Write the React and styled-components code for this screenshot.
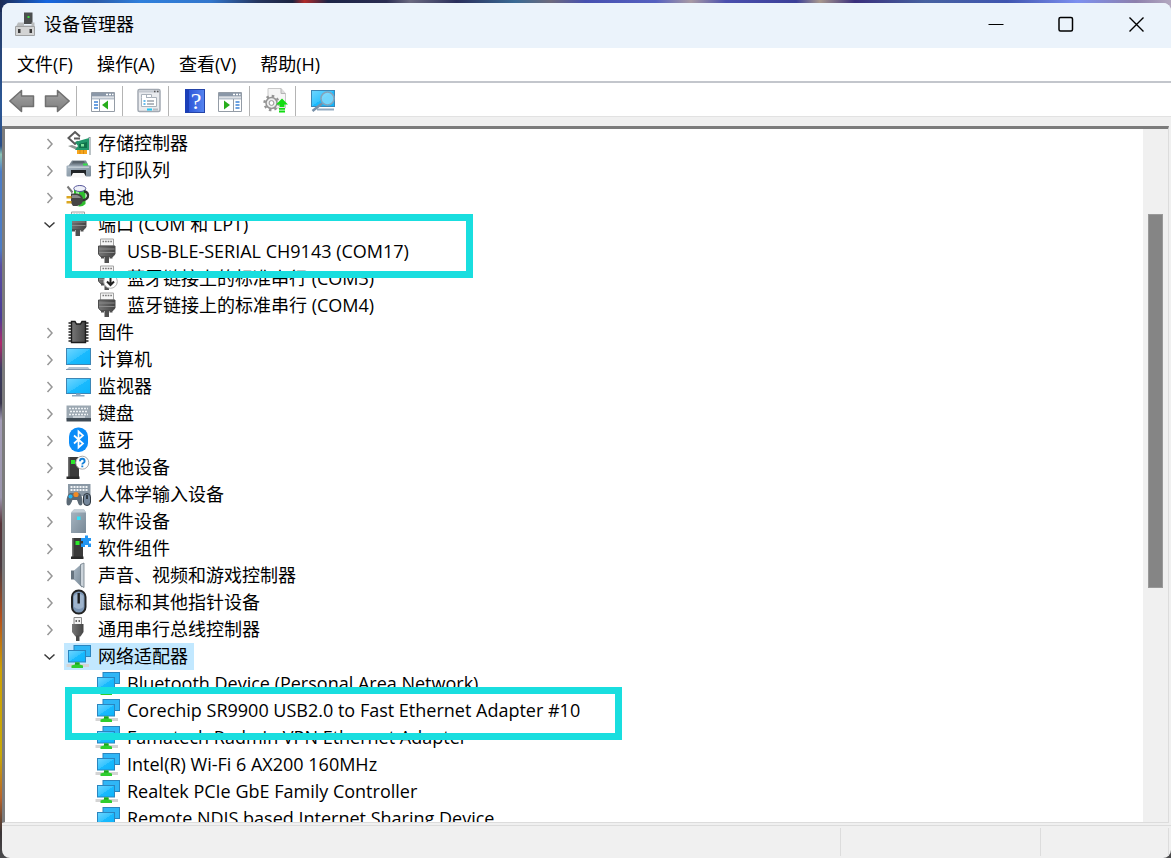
import React from "react"
import styled, { createGlobalStyle } from "styled-components"

const GlobalStyle = createGlobalStyle`
  * {
    box-sizing: border-box;
  }
  body {
    margin: 0;
    font-family: "Open Sans", "Noto Sans CJK SC", sans-serif;
    font-size: 18px;
    color: #000;
  }
  button {
    font: inherit;
    color: inherit;
    border: 0;
    padding: 0;
    background: none;
  }
  svg {
    display: block;
    flex: none;
  }
`

const Desktop = styled.div`
  height: 100vh;
  padding: 3px 0 0 2px;
  background:
    linear-gradient(
        90deg,
        #1b2b55 0,
        #1666e0 4%,
        #2a5aa8 8%,
        #2f7fdc 12%,
        #3276cc 18%,
        #25355f 22%,
        #1c2340 25%,
        #b02a2a 26%,
        #1d2547 28%,
        #2a2d52 33%,
        #6b6a80 35%,
        #2a2f5c 39%,
        #3a6a94 44%,
        #6d6a7c 47%,
        #4650b0 50%,
        #5560c0 56%,
        #a89aa4 59%,
        #4a4fae 62%,
        #3b3f98 68%,
        #a8988e 70%,
        #3a2f7c 73%,
        #4661a0 79%,
        #3f55b0 86%,
        #7d90f0 92%,
        #8d80ac 97%,
        #b3a8c0 100%
      )
      top / 100% 12px no-repeat,
    linear-gradient(
      180deg,
      #22335c 0,
      #2c5896 12%,
      #2a4d86 17%,
      #8cc4b4 18%,
      #4d7cc4 20%,
      #4d7cc4 29%,
      #5a4fa0 31%,
      #4a3c94 37%,
      #b02a6c 40%,
      #3c3c60 43%,
      #39364c 47%,
      #a39cb6 49%,
      #9a94ac 58%,
      #58343a 61%,
      #4a3c42 66%,
      #b4501c 72%,
      #cda006 78%,
      #c8a808 88%,
      #b8642c 93%,
      #3a3436 97%,
      #4a4a4c 100%
    );
`

const Window = styled.div`
  height: 100%;
  display: flex;
  flex-direction: column;
  border-radius: 8px;
  overflow: hidden;
  background: #f0f0f0;
`

const TitleBar = styled.header`
  display: flex;
  align-items: center;
  height: 45px;
  flex: none;
  padding: 0 0 3px 12px;
  background: #ebf3fb;
`

const Title = styled.h1`
  flex: 1;
  margin: 0 0 0 4px;
  font-size: 18px;
  font-weight: 400;
  line-height: 26px;
`

const CaptionButton = styled.button`
  display: flex;
  align-items: center;
  justify-content: center;
  width: 70px;
  height: 42px;
`

const MenuBar = styled.nav`
  display: flex;
  align-items: center;
  height: 35px;
  flex: none;
  padding-left: 3px;
  background: #fff;
  border-bottom: 2px solid #c3c6cc;
`

const MenuButton = styled.button`
  padding: 0 12px;
  line-height: 27px;
`

const ToolBar = styled.div`
  display: flex;
  align-items: center;
  height: 34px;
  flex: none;
  padding: 2px 0 0 2px;
  background: #fff;
  border-bottom: 1px solid #e2e2e2;
`

const ToolButton = styled.button`
  display: flex;
  align-items: center;
  justify-content: center;
  width: 35px;
  height: 30px;
`

const Separator = styled.span`
  width: 2px;
  height: 30px;
  margin: 0 8px 0 1px;
  border-right: 1px solid #b4b4b4;
`

const Content = styled.main`
  display: flex;
  flex: 1;
  min-height: 0;
  margin: 9px 2px 0 0;
  border: solid;
  border-width: 3px 1px 1px 3px;
  border-color: #7c7c7c #dcdcdc #dcdcdc #7c7c7c;
  background: #fff;
`

const TreePane = styled.div`
  position: relative;
  flex: 1;
  min-width: 0;
  overflow: hidden;
  padding-top: 1px;
`

const TreeList = styled.ul`
  margin: 0;
  padding: 0;
  list-style: none;
`

const Row = styled.div`
  display: flex;
  align-items: center;
  height: 27px;
  padding-left: ${(p) => (p.$child ? 61 : 32)}px;
`

const Expander = styled.button`
  display: flex;
  align-items: center;
  justify-content: center;
  width: 24px;
  height: 27px;
`

const Spacer = styled.span`
  width: 24px;
`

const Label = styled.span`
  display: flex;
  align-items: center;
  height: 27px;
  margin-left: 3px;
  padding: 0 6px 0 2px;
  gap: 6px;
  line-height: 27px;
  white-space: nowrap;
  background: ${(p) => (p.$selected ? "#c2e8ff" : "transparent")};
`

const Highlight = styled.div`
  position: absolute;
  left: 60px;
  top: ${(p) => p.$top}px;
  width: ${(p) => p.$width}px;
  height: ${(p) => p.$height}px;
  border: 7px solid #19dedf;
  pointer-events: none;
`

const ScrollTrack = styled.div`
  width: 25px;
  padding: 0 5px;
  background: #f0f0f0;
`

const ScrollThumb = styled.div`
  position: relative;
  top: 12.3%;
  height: 54%;
  background: #858585;
  border: 1px solid #999;
`

const StatusBar = styled.footer`
  display: flex;
  height: 33px;
  flex: none;
  margin-top: 2px;
  padding: 2px 2px 2px 0;
  border-top: 1px solid #dcdcdc;
`

const StatusCell = styled.div`
  flex: ${(p) => (p.$width ? `0 0 ${p.$width}px` : 1)};
  border-right: 1px solid #dcdcdc;
`

/* ---- tree icons, drawn on a 26 x 27 grid ---- */

const Icon = ({ children }) => (
  <svg width="26" height="27" viewBox="0 0 26 27" aria-hidden="true">
    {children}
  </svg>
)

const HiddenSvg = styled.svg`
  position: absolute;
`

const Defs = () => (
  <HiddenSvg width="0" height="0" aria-hidden="true">
    <defs>
      <linearGradient id="screen" x1="0" y1="0" x2="1" y2="1">
        <stop offset="0" stopColor="#6fd6ff" />
        <stop offset="0.5" stopColor="#35c4ff" />
        <stop offset="0.5" stopColor="#1abafe" />
        <stop offset="1" stopColor="#0cb4fb" />
      </linearGradient>
      <linearGradient id="steel" x1="0" y1="0" x2="1" y2="1">
        <stop offset="0" stopColor="#a9b7c3" />
        <stop offset="1" stopColor="#778896" />
      </linearGradient>
      <linearGradient id="dark" x1="0" y1="0" x2="1" y2="0">
        <stop offset="0" stopColor="#777" />
        <stop offset="1" stopColor="#444" />
      </linearGradient>
      <linearGradient id="arrow" x1="0" y1="0" x2="0" y2="1">
        <stop offset="0" stopColor="#a6a6a6" />
        <stop offset="0.5" stopColor="#909090" />
        <stop offset="1" stopColor="#7e7e7e" />
      </linearGradient>
    </defs>
  </HiddenSvg>
)

const StorageIcon = () => (
  <Icon>
    <path d="M13.500 6 9 2 2.500 8 9 14l3-2.500M9 2l5 4.500M8 8.500h6" fill="none" stroke="#5a5a5a" strokeWidth="2" />
    <path d="M2 16l4-1 5 2v3z" fill="#8e9692" />
    <path d="M9 12l14-4v12H9l3-4z" fill="#22986a" />
    <path d="M13 14l8-2v6h-8z" fill="#12704a" />
    <path d="M15 14h3v2.500h-3z" fill="#7fe39c" />
    <path d="M11 20h10v4H11z" fill="#f7a51c" />
    <path d="M14 20v4M17.500 20v4" stroke="#d58a10" />
    <path d="M22.500 7.500h1.500V25" fill="none" stroke="#8e9aa0" strokeWidth="1.200" />
  </Icon>
)

const PrinterIcon = () => (
  <Icon>
    <path d="M6 3.500h14l3 6H2z" fill="#7c8994" />
    <path d="M7 4h11l1 2.500H6z" fill="#59646d" />
    <rect x="0.500" y="8.500" width="24.500" height="11" rx="1" fill="url(#steel)" />
    <path d="M2 9.500h21v1.500H2z" fill="#c0cbd3" />
    <path d="M17 6.500h4.500v2H17z" fill="#35e04c" />
    <path d="M5 13h15v6H5z" fill="#1f2326" />
    <path d="M7 16h11l2.500 4.500h-16z" fill="#f6f6f6" />
  </Icon>
)

const BatteryIcon = () => (
  <Icon>
    <path d="M1.500 2.500l5 6" stroke="#777" strokeWidth="2" />
    <path d="M8 5h11.500v15q-5.500 5-11.500 0z" fill="#2fbe2f" />
    <path d="M10 6h3v16h-3z" fill="#9af09a" />
    <ellipse cx="13.800" cy="4.500" rx="6" ry="3" fill="#eef0f8" stroke="#55559a" />
    <path d="M14 16.500q8.500 0 8-5.500-.5-3.500-4-3.500" fill="none" stroke="#333" strokeWidth="2.400" />
    <path d="M5 9.500h6q6 1 6 6t-6 6.500H7l-2-3z" fill="#454545" />
    <path d="M6 11h5q3 1 4 3H6z" fill="#8a8a8a" />
    <path d="M0.500 12h5v2.500h-5zM0.500 17h5v2.500h-5z" fill="#dba722" />
  </Icon>
)

const PlugShape = () => (
  <>
    <path d="M5.500 1h13v7h-13z" fill="#f6f6f6" stroke="#a2a2a2" />
    <path d="M7.500 3.500h9.500" stroke="#777" strokeWidth="1.600" strokeDasharray="1.600 1" />
    <path d="M3.500 8h16.500v8l-2 2.500H5.500l-2-2.500z" fill="url(#dark)" stroke="#4c4c4c" />
    <path d="M4 11h15.500M4 14.500h15.500" stroke="#8a8a8a" />
    <path d="M6 18h3v2.500H6zM14.500 18h3v2.500h-3zM9.500 18.500h4.500V25H9.500z" fill="#505050" />
  </>
)

const PortIcon = () => (
  <Icon>
    <PlugShape />
  </Icon>
)

const PortDisabledIcon = () => (
  <Icon>
    <PlugShape />
    <circle cx="15.500" cy="16.500" r="6.800" fill="#fff" stroke="#b0b0b0" />
    <path d="M15.500 12.500v7.500M12 16.500l3.500 3.500 3.500-3.500" fill="none" stroke="#222" strokeWidth="2" />
  </Icon>
)

const ChipIcon = () => (
  <Icon>
    <path d="M2.500 4h3M2.500 7h3M2.500 10h3M2.500 13h3M2.500 16h3M2.500 19h3M2.500 22h3M19.500 4h3M19.500 7h3M19.500 10h3M19.500 13h3M19.500 16h3M19.500 19h3M19.500 22h3" stroke="#222" strokeWidth="1.600" />
    <path d="M5.500 2.500H9l1.500 2.500h4L16 2.500h3.500v21h-14z" fill="url(#dark)" stroke="#1c1c1c" strokeWidth="1.400" />
  </Icon>
)

const ComputerIcon = () => (
  <Icon>
    <rect x="0.500" y="2.500" width="24" height="16" fill="url(#screen)" stroke="#3d86b5" />
    <path d="M3 21h19l2.500 3H0z" fill="#b4c4d4" />
    <path d="M0 23.500h25" stroke="#8197af" />
  </Icon>
)

const MonitorIcon = () => (
  <Icon>
    <rect x="0.500" y="5.500" width="24" height="15" fill="url(#screen)" stroke="#3d86b5" />
    <path d="M10 20.500h4.500V22h4v1.500H6V22h4z" fill="#8fa9c0" />
  </Icon>
)

const KeyboardIcon = () => (
  <Icon>
    <path d="M0.500 5.500h24.500v14H0.500z" fill="#9ca8b2" />
    <path d="M3 8.500h19M4 11.500h17M3 14.500h19" stroke="#eef2f5" strokeWidth="1.600" strokeDasharray="2 1" />
    <path d="M7 17h12" stroke="#eef2f5" />
    <path d="M0.500 18h24.500v3.500H0.500z" fill="#3f4b55" />
  </Icon>
)

const BluetoothIcon = () => (
  <Icon>
    <rect x="3" y="0.500" width="19" height="24.500" rx="9" fill="#0a8cf8" />
    <path d="M8 8.500l9 8-4.500 4V4.500l4.500 4-9 8" fill="none" stroke="#fff" strokeWidth="1.700" />
  </Icon>
)

const UnknownIcon = () => (
  <Icon>
    <path d="M2 3h11v20H2z" fill="#3a3a3a" />
    <path d="M2 3h1.500v20H2z" fill="#707070" />
    <path d="M0.500 22.500h13V25h-13z" fill="#2a2a2a" />
    <rect x="5" y="6" width="4" height="4" fill="#2be82b" />
    <circle cx="16.300" cy="8.700" r="6.500" fill="#fff" stroke="#a8a8a8" />
    <path d="M14 7.200q0-2.400 2.300-2.400t2.300 2.400q0 1-1.300 1.800-1 .6-1 1.500M16.300 11.500v1.700" fill="none" stroke="#1580d8" strokeWidth="1.900" />
  </Icon>
)

const HidIcon = () => (
  <Icon>
    <path d="M2 3h22.500v12H2z" fill="#8a98a5" />
    <path d="M4.500 6h18M4.500 9h18" stroke="#f0f3f5" strokeWidth="1.800" strokeDasharray="2 1" />
    <path d="M4 12h9q3.500 2 3.500 9 0 3.500-2 3.500t-3.500-5.500H6.500q-2 5.500-4 5.500T0.500 21Q0.500 14 4 12z" fill="#5b6975" />
    <path d="M6.500 19.500H11l1 4H5.500z" fill="#fff" />
    <circle cx="4.500" cy="15.500" r="2" fill="#20b5f5" />
    <circle cx="10" cy="13.500" r="2.600" fill="#f08a24" />
    <rect x="17.500" y="12.500" width="7" height="12" rx="3.500" fill="#74869a" stroke="#2e3740" />
    <path d="M21 14v4" stroke="#1d2329" strokeWidth="1.500" />
  </Icon>
)

const SoftDeviceIcon = () => (
  <Icon>
    <path d="M5 4.500l3-3h10l2 3v20.500H5z" fill="url(#steel)" />
    <path d="M5 4.500l3-3h10l2 3z" fill="#c4ced6" />
    <rect x="11" y="8.500" width="3.500" height="3.500" fill="#32e3fb" />
  </Icon>
)

const ComponentIcon = () => (
  <Icon>
    <path d="M6 3h11v19H6z" fill="#3a3a3a" />
    <path d="M6 3h1.500v19H6z" fill="#707070" />
    <path d="M5 21.500h12.500V24H5z" fill="#2a2a2a" />
    <rect x="9.500" y="6" width="4" height="4" fill="#2be82b" />
    <path d="M15 3h4V0.500h3V3h3v3h-2v2.500h2V12h-3v-2h-3v2h-4V8.500h2V6h-2z" fill="#2196f3" />
  </Icon>
)

const SpeakerIcon = () => (
  <Icon>
    <path d="M5 8.500h5v9H5z" fill="#66737e" />
    <path d="M8 8.500l8-7v24l-8-8z" fill="url(#steel)" />
    <path d="M14.500 2.500L18 1v24.500l-3.500-2z" fill="#ccd4db" stroke="#707c86" strokeWidth="0.800" />
  </Icon>
)

const MouseIcon = () => (
  <Icon>
    <rect x="6" y="1.500" width="13.500" height="23" rx="6.500" fill="#7b95b3" stroke="#222" strokeWidth="2" />
    <path d="M8 7q4.500-5 9.500 0v11q-4.500 4-9.500 0z" fill="#9fb4cc" />
    <path d="M12.700 4v10.500" stroke="#1d1d1d" strokeWidth="2.400" />
  </Icon>
)

const UsbIcon = () => (
  <Icon>
    <path d="M8 1.500h7.500V9H8z" fill="#f2f2f2" stroke="#8a8a8a" />
    <path d="M9.500 4h1.500v2H9.500zM12.500 4H14v2h-1.500z" fill="#666" />
    <path d="M6 8h11.500v8l-3 4.500H9.500L6 16z" fill="url(#dark)" />
    <path d="M10 19.500h3.500V25H10z" fill="#4a4a4a" />
  </Icon>
)

const NetworkIcon = () => (
  <Icon>
    <rect x="8" y="2.500" width="16.500" height="11" fill="#2fb6f6" stroke="#2a85bf" />
    <rect x="2.500" y="7.500" width="17" height="11.500" fill="url(#screen)" stroke="#2a85bf" />
    <path d="M0.500 21h22.500v3H0.500z" fill="#d4d4d4" />
    <path d="M9 19.500h4.500v2l3.500 1V25H5.500v-2.500l3.500-1z" fill="#2fce2f" />
    <path d="M9 19.500h4.500v2H9z" fill="#1fa51f" />
  </Icon>
)

/* ---- toolbar icons, drawn on a 26 x 26 grid ---- */

const ToolSvg = ({ children }) => (
  <svg width="26" height="26" viewBox="0 0 26 26" aria-hidden="true">
    {children}
  </svg>
)

const BackIcon = () => (
  <ToolSvg>
    <path d="M0.800 13 12.500 2.500V8h12v10.500h-12v5z" fill="url(#arrow)" stroke="#707070" strokeWidth="1.500" strokeLinejoin="round" />
  </ToolSvg>
)

const ForwardIcon = () => (
  <ToolSvg>
    <path d="M25.200 13 13.500 2.500V8h-12v10.500h12v5z" fill="url(#arrow)" stroke="#707070" strokeWidth="1.500" strokeLinejoin="round" />
  </ToolSvg>
)

const PanelFrame = ({ children }) => (
  <ToolSvg>
    <path d="M1.500 4.500h23v19h-23z" fill="#fff" stroke="#949ca6" />
    <path d="M2 5h22v3.500H2z" fill="#8b98a8" />
    <path d="M16 6.500h2M19 6.500h2M22 6.500h1.500" stroke="#fff" strokeWidth="1.500" />
    <path d="M2 10.500h22" stroke="#b9c2cc" strokeWidth="2" />
    {children}
  </ToolSvg>
)

const TreePanelIcon = () => (
  <PanelFrame>
    <path d="M9.500 11v12" stroke="#949ca6" />
    <path d="M4 14h4M4 17h4M4 20h4" stroke="#3c82d6" strokeWidth="1.500" />
    <path d="M18 12.500v9L12 17z" fill="#27ad1c" />
  </PanelFrame>
)

const ActionPanelIcon = () => (
  <PanelFrame>
    <path d="M16.500 11v12" stroke="#949ca6" />
    <path d="M18.500 14h4M18.500 17h4M18.500 20h4" stroke="#3c82d6" strokeWidth="1.500" />
    <path d="M7 12.500v9l6-4.500z" fill="#27ad1c" />
  </PanelFrame>
)

const PropertiesIcon = () => (
  <ToolSvg>
    <rect x="2" y="1.500" width="22" height="22" rx="1.500" fill="#e9ebee" stroke="#a2a9b2" strokeWidth="1.500" />
    <path d="M3 3.500h20" stroke="#c3c8cf" strokeWidth="2" />
    <path d="M18 3.500h1.500M21 3.500h1.500" stroke="#555" strokeWidth="1.500" />
    <path d="M5.500 9.500v-3h10v3h5v9h-15z" fill="#fff" stroke="#a9b1ba" />
    <path d="M10.500 7v3M15.500 9.500H10.500" stroke="#a9b1ba" />
    <path d="M7.500 13h2M7.500 16h2" stroke="#35a6e8" strokeWidth="1.500" />
    <path d="M11 13h7M11 16h7" stroke="#9aa2ac" strokeWidth="1.500" />
    <path d="M11 21.500h5" stroke="#20c6f2" strokeWidth="2" />
    <path d="M17 21.500h5" stroke="#b6bcc4" strokeWidth="2" />
  </ToolSvg>
)

const HelpBook = styled.span`
  width: 20px;
  height: 24px;
  border: 1px solid #2444a8;
  border-left: 4px solid #1b3fb8;
  background: linear-gradient(90deg, #2d57d8, #5584f0);
  color: #fff;
  font-family: "Liberation Serif", serif;
  font-size: 24px;
  line-height: 22px;
`

const ScanHardwareIcon = () => (
  <ToolSvg>
    <path d="M5 0.500h13l4.500 5V20H5z" fill="#f5f5f5" stroke="#c8c8c8" />
    <path d="M18 0.500v5h4.500" fill="#ddd" stroke="#b4b4b4" />
    <circle cx="8.500" cy="15" r="5.500" fill="#ededed" stroke="#949494" strokeWidth="1.500" />
    <circle cx="8.500" cy="15" r="7" fill="none" stroke="#949494" strokeWidth="2.400" strokeDasharray="2.500 3" />
    <circle cx="8.500" cy="15" r="2.400" fill="#fff" stroke="#949494" />
    <path d="M19 10.500l6 6h-3.500V19h-5v-2.500H13z" fill="#12dc12" />
    <path d="M16 20.800h6M16 23.500h6" stroke="#12dc12" strokeWidth="1.800" />
  </ToolSvg>
)

const ScanIcon = () => (
  <ToolSvg>
    <rect x="2.500" y="2.500" width="23" height="16" fill="url(#screen)" stroke="#3d86b5" />
    <path d="M8 21.500h17" stroke="#93abc2" strokeWidth="2" />
    <path d="M13 15.500 3.500 23" stroke="#7890a8" strokeWidth="2.600" />
    <circle cx="18.500" cy="10.500" r="6.500" fill="#8adcfb" fillOpacity="0.800" stroke="#84a4bc" strokeWidth="1.500" />
  </ToolSvg>
)

const AppIcon = () => (
  <svg width="26" height="26" viewBox="0 0 26 26" aria-hidden="true">
    <path d="M10 1.500h8.500V13H10z" fill="#4c4f50" />
    <rect x="13.500" y="5" width="2" height="2" fill="#3de03d" />
    <path d="M4 11.500h6v3h7.500v-3h3v4H2z" fill="#b9bcbd" />
    <path d="M1.500 15.500h19v9h-19z" fill="#d3d4d4" stroke="#a0a2a3" />
    <path d="M4 18h2.500v4H4zM15.500 18H18v4h-2.500z" fill="#3c3c3c" />
  </svg>
)

const Chevron = ({ open }) => (
  <svg width="12" height="12" viewBox="0 0 12 12" fill="none" aria-hidden="true">
    {open ? (
      <path d="M1.500 3.500 6.500 8l5-4.500" stroke="#3a3a3a" strokeWidth="1.500" />
    ) : (
      <path d="M4.500 1 9 6l-4.500 5" stroke="#979797" strokeWidth="1.500" />
    )}
  </svg>
)

const devices = [
  { name: "存储控制器", icon: StorageIcon },
  { name: "打印队列", icon: PrinterIcon },
  { name: "电池", icon: BatteryIcon },
  {
    name: "端口 (COM 和 LPT)",
    icon: PortIcon,
    children: [
      { name: "USB-BLE-SERIAL CH9143 (COM17)", icon: PortIcon },
      { name: "蓝牙链接上的标准串行 (COM3)", icon: PortDisabledIcon },
      { name: "蓝牙链接上的标准串行 (COM4)", icon: PortIcon },
    ],
  },
  { name: "固件", icon: ChipIcon },
  { name: "计算机", icon: ComputerIcon },
  { name: "监视器", icon: MonitorIcon },
  { name: "键盘", icon: KeyboardIcon },
  { name: "蓝牙", icon: BluetoothIcon },
  { name: "其他设备", icon: UnknownIcon },
  { name: "人体学输入设备", icon: HidIcon },
  { name: "软件设备", icon: SoftDeviceIcon },
  { name: "软件组件", icon: ComponentIcon },
  { name: "声音、视频和游戏控制器", icon: SpeakerIcon },
  { name: "鼠标和其他指针设备", icon: MouseIcon },
  { name: "通用串行总线控制器", icon: UsbIcon },
  {
    name: "网络适配器",
    icon: NetworkIcon,
    selected: true,
    children: [
      { name: "Bluetooth Device (Personal Area Network)", icon: NetworkIcon },
      { name: "Corechip SR9900 USB2.0 to Fast Ethernet Adapter #10", icon: NetworkIcon },
      { name: "Famatech Radmin VPN Ethernet Adapter", icon: NetworkIcon },
      { name: "Intel(R) Wi-Fi 6 AX200 160MHz", icon: NetworkIcon },
      { name: "Realtek PCIe GbE Family Controller", icon: NetworkIcon },
      { name: "Remote NDIS based Internet Sharing Device", icon: NetworkIcon },
    ],
  },
]

const menus = ["文件(F)", "操作(A)", "查看(V)", "帮助(H)"]

const TreeItem = ({ item, child }) => {
  const ItemIcon = item.icon
  return (
    <li role="treeitem" aria-expanded={child ? undefined : !!item.children} aria-selected={!!item.selected}>
      <Row $child={child}>
        {child ? (
          <Spacer />
        ) : (
          <Expander type="button" aria-label={item.name}>
            <Chevron open={!!item.children} />
          </Expander>
        )}
        <Label $selected={item.selected}>
          <ItemIcon />
          <span>{item.name}</span>
        </Label>
      </Row>
      {item.children && (
        <TreeList role="group">
          {item.children.map((c) => (
            <TreeItem key={c.name} item={c} child />
          ))}
        </TreeList>
      )}
    </li>
  )
}

const App = () => (
  <Desktop>
    <GlobalStyle />
    <Defs />
    <Window>
      <TitleBar>
        <AppIcon />
        <Title>设备管理器</Title>
        <CaptionButton type="button" aria-label="最小化">
          <svg width="16" height="16" viewBox="0 0 16 16">
            <path d="M0.500 8.500h15" stroke="#000" />
          </svg>
        </CaptionButton>
        <CaptionButton type="button" aria-label="最大化">
          <svg width="16" height="16" viewBox="0 0 16 16">
            <rect x="1" y="1.500" width="13.500" height="13.500" rx="1.500" fill="none" stroke="#000" strokeWidth="1.500" />
          </svg>
        </CaptionButton>
        <CaptionButton type="button" aria-label="关闭">
          <svg width="16" height="16" viewBox="0 0 16 16">
            <path d="M1.500 1.500l14 14M15.500 1.500l-14 14" stroke="#000" strokeWidth="1.400" />
          </svg>
        </CaptionButton>
      </TitleBar>
      <MenuBar>
        {menus.map((name) => (
          <MenuButton type="button" key={name}>
            {name}
          </MenuButton>
        ))}
      </MenuBar>
      <ToolBar role="toolbar">
        <ToolButton type="button" aria-label="后退">
          <BackIcon />
        </ToolButton>
        <ToolButton type="button" aria-label="前进">
          <ForwardIcon />
        </ToolButton>
        <Separator />
        <ToolButton type="button" aria-label="显示/隐藏控制台树">
          <TreePanelIcon />
        </ToolButton>
        <Separator />
        <ToolButton type="button" aria-label="属性">
          <PropertiesIcon />
        </ToolButton>
        <Separator />
        <ToolButton type="button" aria-label="帮助">
          <HelpBook>?</HelpBook>
        </ToolButton>
        <ToolButton type="button" aria-label="显示/隐藏操作窗格">
          <ActionPanelIcon />
        </ToolButton>
        <Separator />
        <ToolButton type="button" aria-label="更新驱动程序">
          <ScanHardwareIcon />
        </ToolButton>
        <Separator />
        <ToolButton type="button" aria-label="扫描检测硬件改动">
          <ScanIcon />
        </ToolButton>
      </ToolBar>
      <Content>
        <TreePane>
          <TreeList role="tree" aria-label="设备管理器">
            {devices.map((d) => (
              <TreeItem key={d.name} item={d} />
            ))}
          </TreeList>
          <Highlight $top={85} $width={408} $height={64} />
          <Highlight $top={558} $width={557} $height={53} />
        </TreePane>
        <ScrollTrack>
          <ScrollThumb />
        </ScrollTrack>
      </Content>
      <StatusBar>
        <StatusCell />
        <StatusCell $width={200} />
        <StatusCell $width={128} />
      </StatusBar>
    </Window>
  </Desktop>
)

export default App
